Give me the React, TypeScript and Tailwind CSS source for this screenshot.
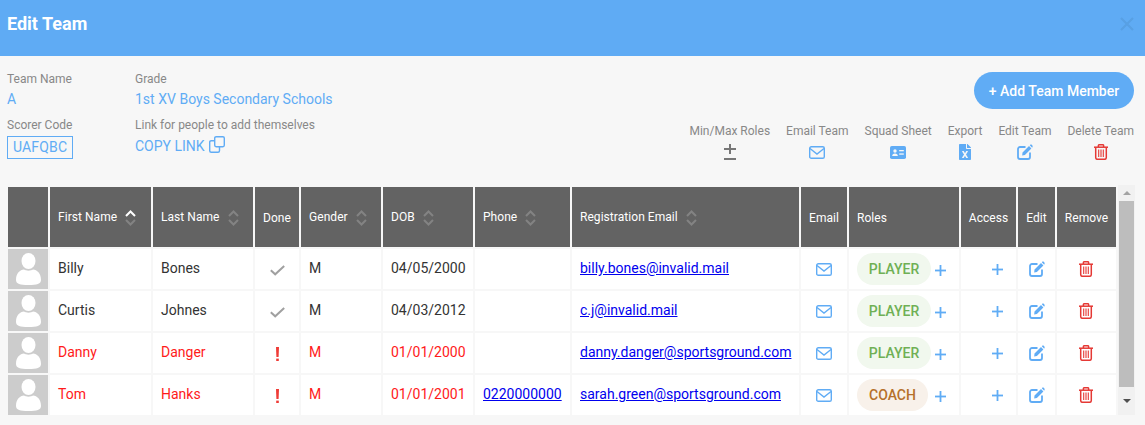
import React from 'react';
import { FaFileExcel } from 'react-icons/fa';

const players = [
  { first: 'Billy', last: 'Bones', ok: true, dob: '04/05/2000', phone: '', email: 'billy.bones@invalid.mail', role: 'PLAYER' },
  { first: 'Curtis', last: 'Johnes', ok: true, dob: '04/03/2012', phone: '', email: 'c.j@invalid.mail', role: 'PLAYER' },
  { first: 'Danny', last: 'Danger', ok: false, dob: '01/01/2000', phone: '', email: 'danny.danger@sportsground.com', role: 'PLAYER' },
  { first: 'Tom', last: 'Hanks', ok: false, dob: '01/01/2001', phone: '0220000000', email: 'sarah.green@sportsground.com', role: 'COACH' },
];

const SortCarets = ({ active }: { active?: boolean }) => (
  <svg width="11" height="18" viewBox="0 0 11 18" fill="none" strokeWidth="2" className="ml-2 inline-block align-middle">
    <path d="M1 7 L5.5 2.5 L10 7" stroke={active ? '#ffffff' : '#838383'} />
    <path d="M1 11 L5.5 15.5 L10 11" stroke="#838383" />
  </svg>
);

const Avatar = () => (
  <svg width="40" height="40" viewBox="0 0 40 40" className="block">
    <rect width="40" height="40" fill="#cccccc" />
    <ellipse cx="20.5" cy="12" rx="7" ry="8" fill="#ffffff" />
    <path d="M8 31 C8 24 12 21 16 20.5 C18 22 23 22 25 20.5 C29 21 33 24 33 31 C33 35 29 36 20.5 36 C12 36 8 35 8 31 Z" fill="#ffffff" />
  </svg>
);

const EnvelopeIcon = () => (
  <svg width="16" height="13" viewBox="0 0 16 13" fill="none" stroke="#60acf5" strokeWidth="1.4" className="inline-block">
    <rect x="0.7" y="0.7" width="14.6" height="11.6" rx="1.6" />
    <path d="M1 2.5 L8 8 L15 2.5" />
  </svg>
);

const EditIcon = () => (
  <svg width="16" height="16" viewBox="0 0 16 16" className="inline-block">
    <path d="M8.5 3 H3 A2 2 0 0 0 1 5 V13 A2 2 0 0 0 3 15 H11 A2 2 0 0 0 13 13 V8.5" fill="none" stroke="#60acf5" strokeWidth="1.8" />
    <path d="M5.5 8.6 L12 2.1 L14.4 4.5 L7.9 11 L5.2 11.4 Z M12.8 1.3 L13.6 0.5 Q14 0.2 14.4 0.5 L15.6 1.7 Q15.9 2.1 15.6 2.5 L15.2 3.7 Z" fill="#60acf5" />
  </svg>
);

const TrashIcon = () => (
  <svg width="14" height="16" viewBox="0 0 14 16" fill="none" stroke="#e53935" strokeWidth="1.5" className="inline-block">
    <path d="M0 3.2 H14" />
    <path d="M4.4 3 V1.6 Q4.4 0.7 5.3 0.7 H8.7 Q9.6 0.7 9.6 1.6 V3" />
    <path d="M1.7 3.2 V13.6 Q1.7 15.3 3.4 15.3 H10.6 Q12.3 15.3 12.3 13.6 V3.2" />
    <path d="M4.7 5.5 V13 M7 5.5 V13 M9.3 5.5 V13" strokeWidth="1.1" />
  </svg>
);

const CheckIcon = () => (
  <svg width="15" height="11" viewBox="0 0 15 11" fill="none" stroke="#a0a0a0" strokeWidth="2" className="inline-block">
    <path d="M0.8 5.2 L5.2 9.3 L14.2 1" />
  </svg>
);

const AlertIcon = () => (
  <svg width="3" height="14" viewBox="0 0 3 14" fill="#ef3b36" className="inline-block">
    <path d="M0 0 H3 L2.6 10 H0.4 Z" />
    <rect x="0.2" y="11.6" width="2.6" height="2.4" />
  </svg>
);

const PlusIcon = () => (
  <svg width="11" height="11" viewBox="0 0 11 11" fill="#60acf5" className="inline-block">
    <rect x="0" y="4.6" width="11" height="1.8" />
    <rect x="4.6" y="0" width="1.8" height="11" />
  </svg>
);

const CloneIcon = () => (
  <svg width="16" height="17" viewBox="0 0 16 17" fill="none" stroke="#60acf5" strokeWidth="1.4" className="ml-1 -mt-1 inline-block">
    <rect x="5.7" y="0.7" width="9.6" height="10" rx="1.4" />
    <path d="M5.5 4.7 H2.2 Q0.7 4.7 0.7 6.2 V14.8 Q0.7 16.3 2.2 16.3 H9 Q10.5 16.3 10.5 14.8 V11" />
  </svg>
);

const CardIcon = () => (
  <svg width="16" height="13" viewBox="0 0 16 13" className="inline-block">
    <rect width="16" height="13" rx="1.8" fill="#60acf5" />
    <circle cx="5" cy="5" r="1.7" fill="#f7f7f7" />
    <path d="M2.2 10 Q2.2 7.4 5 7.4 Q7.8 7.4 7.8 10 Z" fill="#f7f7f7" />
    <rect x="9.2" y="4" width="4.6" height="1.3" fill="#f7f7f7" />
    <rect x="9.2" y="7.4" width="4.6" height="1.3" fill="#f7f7f7" />
  </svg>
);

const TeamAction = ({ label, children }: { label: string; children: React.ReactNode }) => (
  <div className="flex flex-col items-center">
    <span className="text-xs leading-[14px] text-[#888888]">{label}</span>
    <div className="mt-[6px] flex h-4 items-center">{children}</div>
  </div>
);

const heads = [
  { label: 'First Name', sort: true, active: true },
  { label: 'Last Name', sort: true },
  { label: 'Done', center: true },
  { label: 'Gender', sort: true },
  { label: 'DOB', sort: true },
  { label: 'Phone', sort: true },
  { label: 'Registration Email', sort: true },
  { label: 'Email', center: true },
  { label: 'Roles' },
  { label: 'Access', center: true },
  { label: 'Edit', center: true },
  { label: 'Remove', center: true },
];

export default function App() {
  return (
    <div className="h-[425px] w-[1145px] overflow-hidden bg-[#f7f7f7] font-['Roboto',sans-serif]">
      <div className="flex h-14 items-start justify-between bg-[#5fabf4] pl-[7px] pr-[11px] pt-[13px]">
        <h1 className="text-lg font-bold leading-[22px] text-white">Edit Team</h1>
        <svg width="14" height="14" viewBox="0 0 14 14" fill="none" stroke="#58a0e4" strokeWidth="2.2" className="mt-[4px]">
          <path d="M1 1 L13 13 M13 1 L1 13" />
        </svg>
      </div>

      <div className="flex h-[129px] justify-between pl-[7px] pr-[11px]">
        <div className="grid grid-cols-[128px_auto] content-start pt-4">
          <div>
            <div className="text-xs leading-[14px] text-[#888888]">Team Name</div>
            <div className="mt-[3px] h-[22px] text-sm leading-[20px] text-[#60acf5]">A</div>
          </div>
          <div>
            <div className="text-xs leading-[14px] text-[#888888]">Grade</div>
            <div className="mt-[3px] h-[22px] text-sm leading-[20px] text-[#60acf5]">1st XV Boys Secondary Schools</div>
          </div>
          <div className="mt-[7px]">
            <div className="text-xs leading-[14px] text-[#888888]">Scorer Code</div>
            <div className="mt-1 inline-block h-[23px] border border-[#60acf5] px-[5px] text-sm leading-[21px] tracking-[0.15px] text-[#60acf5]">UAFQBC</div>
          </div>
          <div className="mt-[7px]">
            <div className="text-xs leading-[14px] text-[#888888]">Link for people to add themselves</div>
            <div className="mt-1 flex items-center text-sm leading-[20px] text-[#60acf5]">
              COPY LINK
              <CloneIcon />
            </div>
          </div>
        </div>

        <div className="flex flex-col items-end pt-4">
          <button className="h-[37px] w-40 rounded-full bg-[#60acf5] text-sm font-medium text-white">+ Add Team Member</button>
          <div className="mt-[15px] flex gap-4">
            <TeamAction label="Min/Max Roles">
              <svg width="12" height="16" viewBox="0 0 12 16" fill="#777777">
                <rect x="0" y="4" width="12" height="2" />
                <rect x="5" y="0" width="2" height="10" />
                <rect x="0" y="14" width="12" height="2" />
              </svg>
            </TeamAction>
            <TeamAction label="Email Team"><EnvelopeIcon /></TeamAction>
            <TeamAction label="Squad Sheet"><CardIcon /></TeamAction>
            <TeamAction label="Export"><FaFileExcel className="h-4 w-3 text-[#60acf5]" /></TeamAction>
            <TeamAction label="Edit Team"><EditIcon /></TeamAction>
            <TeamAction label="Delete Team"><TrashIcon /></TeamAction>
          </div>
        </div>
      </div>

      <div className="flex pl-[6px]">
        <table className="w-[1111px] table-fixed border-separate border-spacing-[2px] text-sm text-[#333333]">
          <colgroup>
            <col className="w-10" />
            <col className="w-[101px]" />
            <col className="w-[100px]" />
            <col className="w-11" />
            <col className="w-20" />
            <col className="w-[90px]" />
            <col className="w-[95px]" />
            <col className="w-[227px]" />
            <col className="w-[46px]" />
            <col className="w-[110px]" />
            <col className="w-[55px]" />
            <col className="w-[37px]" />
            <col className="w-[59px]" />
          </colgroup>
          <thead>
            <tr className="h-[60px] bg-[#636363] text-xs text-white">
              <th className="bg-[#636363]" />
              {heads.map((h) => (
                <th key={h.label} className={h.center ? 'pt-[1px] text-center font-normal tracking-[0.05px]' : 'pl-2 pt-[1px] text-left font-normal tracking-[0.05px]'}>
                  {h.label}
                  {h.sort && <SortCarets active={h.active} />}
                </th>
              ))}
            </tr>
          </thead>
          <tbody>
            {players.map((p) => {
              const color = p.ok ? 'text-[#333333]' : 'text-[#ff1a1a]';
              return (
                <tr key={p.first} className="h-10 bg-white">
                  <td className="p-0"><Avatar /></td>
                  <td className={`pb-[2px] pl-2 ${color}`}>{p.first}</td>
                  <td className={`pb-[2px] pl-2 ${color}`}>{p.last}</td>
                  <td className="text-center leading-none">
                    {p.ok ? <CheckIcon /> : <AlertIcon />}
                  </td>
                  <td className={`pb-[2px] pl-2 ${color}`}>M</td>
                  <td className={`pb-[2px] pl-2 ${color}`}>{p.dob}</td>
                  <td className="pb-[2px] pl-2">
                    {p.phone && <a href="#" className="text-[#0000ee] underline">{p.phone}</a>}
                  </td>
                  <td className="pb-[2px] pl-2"><a href="#" className="text-[#0000ee] underline">{p.email}</a></td>
                  <td className="text-center leading-none"><EnvelopeIcon /></td>
                  <td className="pl-2">
                    <div className="flex items-center">
                      <span className={p.role === 'PLAYER'
                        ? 'flex h-8 w-[74px] items-center justify-center rounded-full bg-[#f1f8ee] text-sm font-medium text-[#6fb055]'
                        : 'flex h-8 w-[71px] items-center justify-center rounded-full bg-[#f8f1ea] text-sm font-medium text-[#b5702a]'}>
                        {p.role}
                      </span>
                      <span className={p.role === 'PLAYER' ? 'ml-1 mt-[2px] flex' : 'ml-[7px] mt-[2px] flex'}><PlusIcon /></span>
                    </div>
                  </td>
                  <td className="pb-[2px] pl-[31px] leading-none"><PlusIcon /></td>
                  <td className="text-center leading-none"><EditIcon /></td>
                  <td className="pr-[2px] text-center leading-none"><TrashIcon /></td>
                </tr>
              );
            })}
          </tbody>
        </table>
        <div className="flex h-[230px] w-[17px] flex-col items-center bg-[#f1f1f1]">
          <div className="flex h-4 items-center"><div className="h-0 w-0 border-x-[4px] border-b-[4px] border-x-transparent border-b-[#a3a3a3]" /></div>
          <div className="h-[186px] w-[15px] bg-[#bdbdbd]" />
          <div className="flex h-7 items-center"><div className="h-0 w-0 border-x-[4px] border-t-[4px] border-x-transparent border-t-[#505050]" /></div>
        </div>
      </div>
    </div>
  );
}
